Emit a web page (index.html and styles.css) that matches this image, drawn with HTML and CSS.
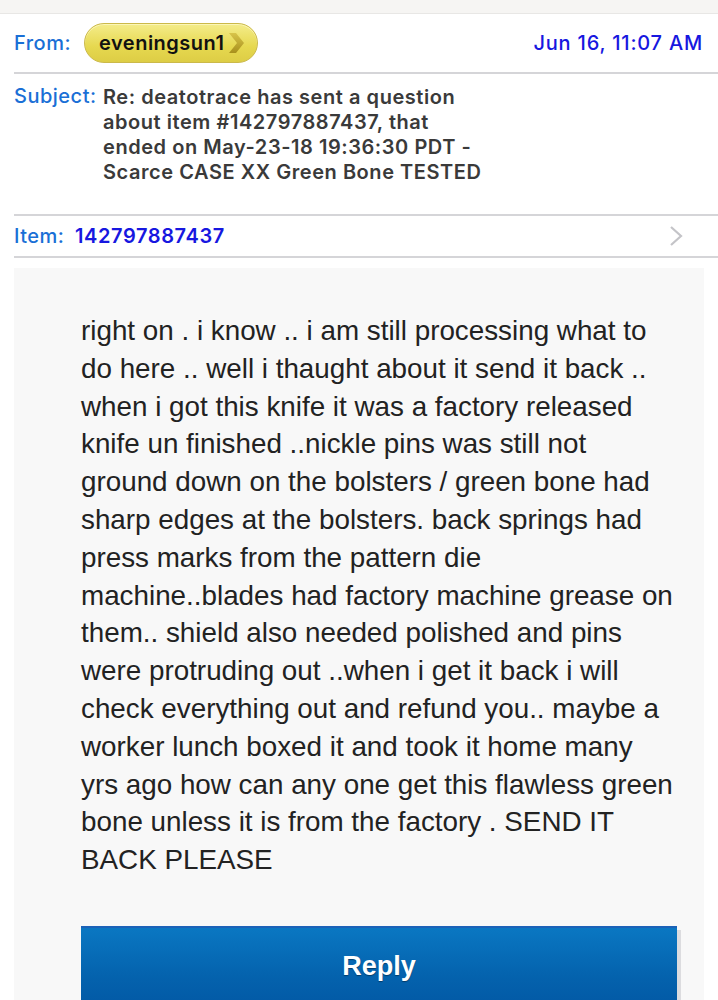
FILE: index.html
```html
<!DOCTYPE html>
<html>
<head>
<meta charset="utf-8">
<link rel="stylesheet" href="styles.css">
</head>
<body>
<div class="topbar"></div>
<div class="header">
  <div class="row from-row">
    <span class="label">From:</span>
    <span class="pill">eveningsun1<svg class="pill-arrow" width="18" height="24" viewBox="0 0 18 24"><defs><linearGradient id="ag" x1="0" y1="0" x2="0" y2="1"><stop offset="0" stop-color="#d8c44a"/><stop offset="1" stop-color="#a8901c"/></linearGradient></defs><path d="M2 2 L9 2 L17 12 L9 22 L2 22 L10 12 Z" fill="url(#ag)"/></svg></span>
    <span class="date">Jun 16, 11:07 AM</span>
  </div>
  <div class="row subject-row">
    <span class="label">Subject:</span>
    <span class="subject">Re: deatotrace has sent a question<br>about item #142797887437, that<br>ended on May-23-18 19:36:30 PDT -<br>Scarce CASE XX Green Bone TESTED</span>
  </div>
  <div class="row item-row">
    <span class="label">Item:</span>
    <span class="item-no">142797887437</span>
    <svg class="chev" width="16" height="22" viewBox="0 0 16 22"><path d="M3 2 L13 11 L3 20" fill="none" stroke="#c4c4c8" stroke-width="2.2"/></svg>
  </div>
</div>
<div class="body">
  <p class="message">right on . i know .. i am still processing what to<br>do here .. well i thaught about it send it back ..<br>when i got this knife it was a factory released<br>knife un finished ..nickle pins was still not<br>ground down on the bolsters / green bone had<br>sharp edges at the bolsters. back springs had<br>press marks from the pattern die<br>machine..blades had factory machine grease on<br>them.. shield also needed polished and pins<br>were protruding out ..when i get it back i will<br>check everything out and refund you.. maybe a<br>worker lunch boxed it and took it home many<br>yrs ago how can any one get this flawless green<br>bone unless it is from the factory . SEND IT<br>BACK PLEASE</p>
  <div class="btn-wrap"><button class="reply">Reply</button></div>
</div>
</body>
</html>
```
FILE: styles.css
```css
* { box-sizing: border-box; }
html, body { margin: 0; padding: 0; background: #fff; }
body { width: 718px; height: 1000px; overflow: hidden; font-family: Inter, "Noto Sans", sans-serif; }
.topbar { height: 14px; background: #f6f5f3; border-bottom: 1px solid #e8e7e5; }
.header { padding-left: 14px; }
.row { display: flex; border-bottom: 2px solid #d5d5d8; }
.label { color: #1a6fd6; font-size: 20px; font-weight: 500; letter-spacing: 0.5px; }
.from-row { height: 60px; align-items: center; padding-right: 15px; }
.from-row .label { width: 70px; }
.pill { display: inline-flex; align-items: center; height: 40px; width: 174px; padding-left: 14px; border-radius: 20px; border: 1px solid #cbb94a; background: linear-gradient(#f4ec8a, #e6d84f 60%, #ddcd45); color: #111; font-size: 20px; font-weight: 600; letter-spacing: 0.5px; box-shadow: inset 0 1px 0 #fbf6b8; }
.pill-arrow { margin-left: 2px; }
.date { margin-left: auto; color: #1717e0; font-size: 20px; font-weight: 500; letter-spacing: 0.8px; }
.subject-row { height: 142px; padding-top: 10px; }
.subject-row .label { width: 89px; line-height: 25px; }
.subject { color: #3a3a3a; font-size: 20px; font-weight: 600; line-height: 25px; letter-spacing: 0.55px; margin-top: 1px; }
.item-row { height: 42px; align-items: center; padding-right: 34px; }
.item-row .label { width: 61px; }
.item-no { color: #1717e0; font-size: 20px; font-weight: 600; letter-spacing: 0.6px; }
.chev { margin-left: auto; }
.body { margin: 10px 14px 0 14px; background: #f8f8f8; padding: 44px 0 0 67px; height: 800px; }
.message { margin: 0; font-family: "Liberation Sans", Arial, sans-serif; font-size: 27.8px; line-height: 37.8px; color: #222; white-space: nowrap; }
.btn-wrap { margin-top: 47px; }
.reply { display: block; width: 596px; height: 100px; border: 0; border-top: 2px solid #1b62b8; background: linear-gradient(#0a77c2, #0462ad 50%, #0153a0); color: #fff; font-family: "Liberation Sans", Arial, sans-serif; font-size: 27px; font-weight: bold; text-shadow: 0 1px 1px rgba(0,0,0,0.4); box-shadow: 4px 4px 0 #dcdcdf; padding: 0 0 20px 0; text-align: center; }
```
